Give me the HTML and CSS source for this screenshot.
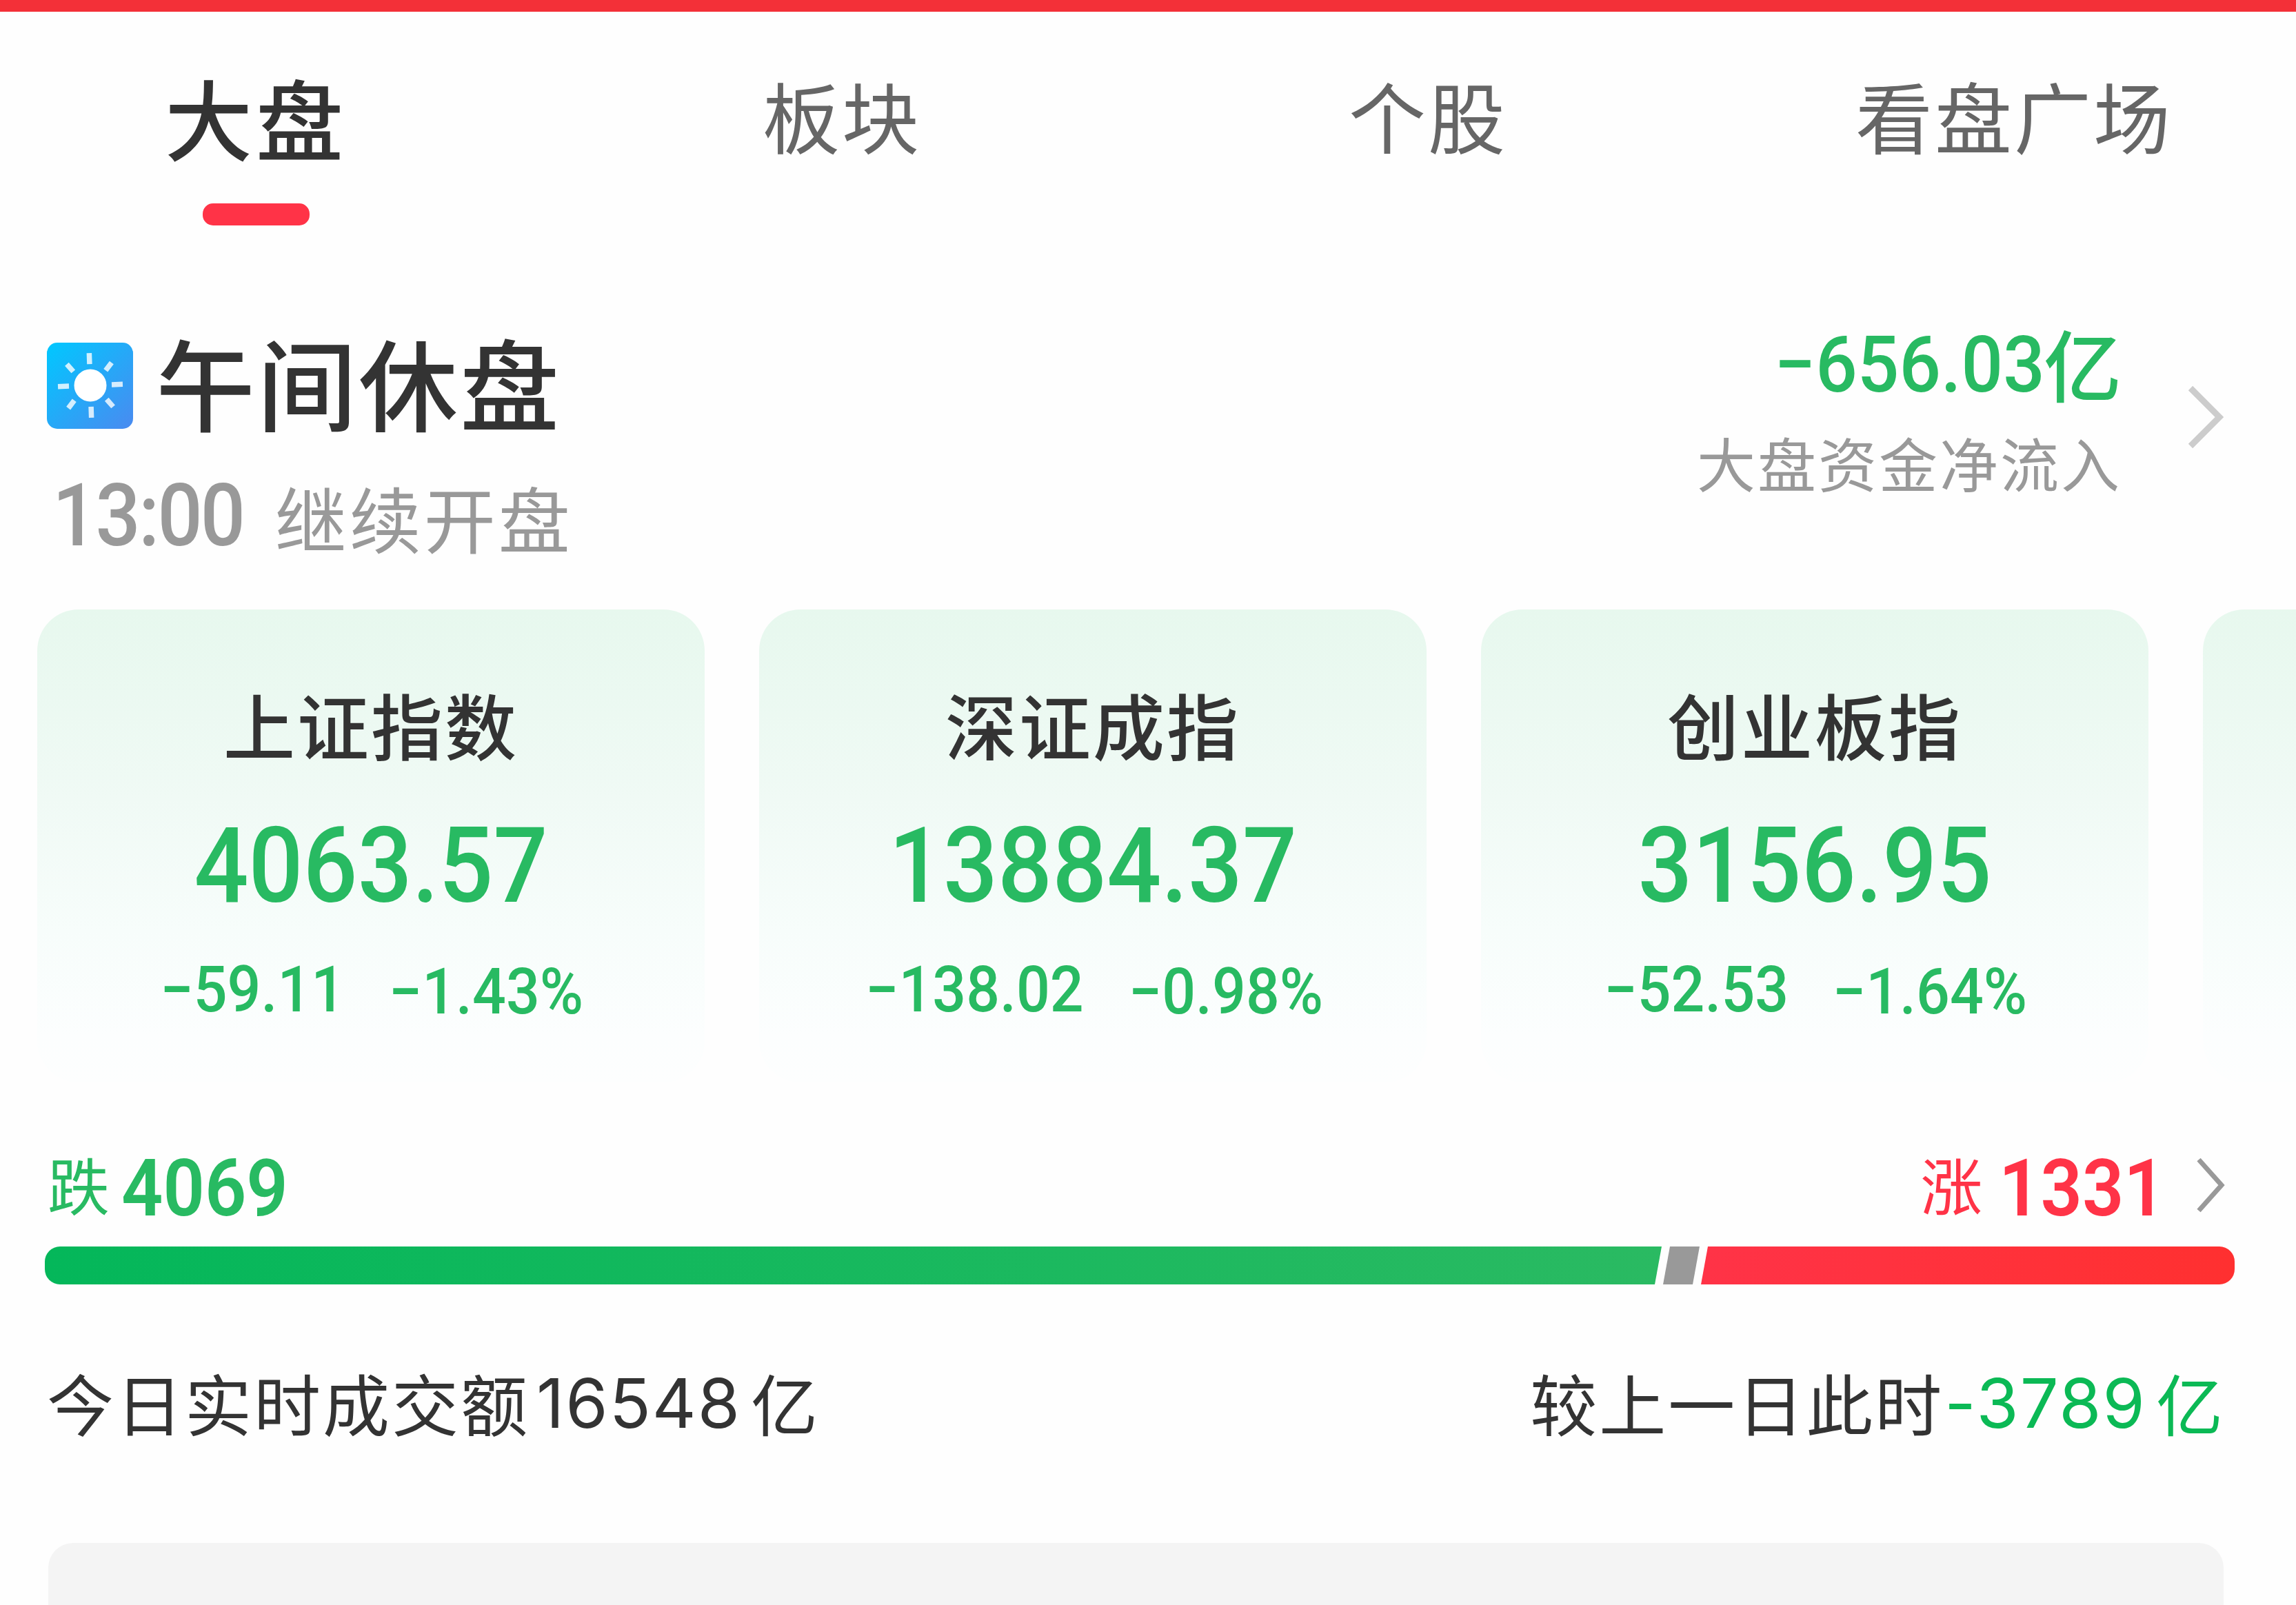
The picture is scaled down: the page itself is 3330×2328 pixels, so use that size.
FILE: index.html
```html
<!DOCTYPE html>
<html lang="zh-CN">
<head>
    <meta charset="UTF-8">
    <title>大盘</title>
    <link rel="stylesheet" href="styles.css">
</head>
<body>
    <div class="top-bar"></div>

    <nav class="tabs">
        <div class="tab active">大盘</div>
        <div class="tab">板块</div>
        <div class="tab">个股</div>
        <div class="tab">看盘广场</div>
    </nav>

    <section class="status">
        <div class="session">
            <div class="session-title">
                <svg class="sun" viewBox="0 0 125 125">
                    <defs>
                        <linearGradient id="sky" x1="0" y1="0" x2="1" y2="1">
                            <stop offset="0" stop-color="#00c8ff"/>
                            <stop offset="1" stop-color="#4a8af0"/>
                        </linearGradient>
                    </defs>
                    <rect width="125" height="125" rx="15" fill="url(#sky)"/>
                    <circle cx="63" cy="62" r="23.5" fill="#fff"/>
                    <g stroke="#fff" stroke-opacity="0.8" stroke-width="7.5" transform="rotate(-2 63 62)">
                        <path d="M63 15v16M63 93v16M16 62h16M94 62h16"/>
                        <path d="M30 30l9 11M95 30l-9 11M30 94l9 -11M95 94l-9 -11"/>
                    </g>
                </svg>
                <h1>午间休盘</h1>
            </div>
            <div class="session-next">
                <span class="num">13:00</span>
                <span class="label">继续开盘</span>
            </div>
        </div>
        <div class="flow">
            <div class="flow-text">
                <div class="flow-value"><span class="num">−656.03</span><span class="unit">亿</span></div>
                <div class="flow-label">大盘资金净流入</div>
            </div>
            <svg class="arrow" viewBox="0 0 52 96"><path d="M4 6L46 48L4 90"/></svg>
        </div>
    </section>

    <section class="cards">
        <div class="card">
            <h2>上证指数</h2>
            <div class="value num">4063.57</div>
            <div class="change"><span class="num">−59.11</span><span class="num pct">−1.43%</span></div>
        </div>
        <div class="card">
            <h2>深证成指</h2>
            <div class="value num">13884.37</div>
            <div class="change"><span class="num">−138.02</span><span class="num pct">−0.98%</span></div>
        </div>
        <div class="card">
            <h2>创业板指</h2>
            <div class="value num">3156.95</div>
            <div class="change"><span class="num">−52.53</span><span class="num pct">−1.64%</span></div>
        </div>
        <div class="card next"></div>
    </section>

    <section class="breadth">
        <div class="breadth-head">
            <div class="fall"><span class="word">跌</span><span class="num">4069</span></div>
            <div class="rise">
                <span class="word">涨</span><span class="num">1331</span>
                <svg class="arrow-small" viewBox="0 0 42 82"><path d="M4 4L37 41L4 78"/></svg>
            </div>
        </div>
        <div class="ratio">
            <div class="ratio-fall"></div>
            <div class="ratio-flat"></div>
            <div class="ratio-rise"></div>
        </div>
    </section>

    <section class="turnover">
        <div class="today"><span>今日实时成交额</span><span class="digits">16548</span><span>亿</span></div>
        <div class="compare"><span>较上一日此时</span><span class="digits down">-3789</span><span class="down">亿</span></div>
    </section>

    <div class="panel"></div>
</body>
</html>
```

FILE: styles.css
```css
* {
    box-sizing: border-box;
}

body {
    margin: 0;
    width: 3330px;
    height: 2328px;
    overflow: hidden;
    display: flex;
    flex-direction: column;
    background-color: #fefefe;
    color: #333;
    font-family: "Noto Sans CJK SC", sans-serif;
    line-height: 1;
    white-space: nowrap;
}

h1, h2 {
    margin: 0;
    font-weight: 500;
}

svg {
    display: block;
    flex: none;
}

.num {
    display: inline-block;
    font-family: Roboto, sans-serif;
    font-weight: 500;
    transform: scaleX(0.935);
}

.top-bar {
    flex: none;
    height: 17px;
    background-color: #f33038;
}

/* tabs */
.tabs {
    flex: none;
    display: flex;
    height: 323px;
    margin-left: -54px;
}

.tab {
    flex: none;
    width: 850px;
    padding-top: 93px;
    text-align: center;
    font-size: 112px;
    letter-spacing: 3px;
    color: #666;
}

.tab:last-child {
    width: 810px;
    margin-left: 20px;
}

.tab.active {
    padding-top: 89px;
    font-size: 127px;
    font-weight: 500;
    letter-spacing: 5px;
    color: #333;
}

.tab.active::after {
    content: "";
    display: block;
    width: 155px;
    height: 32px;
    margin: 62px auto 0;
    border-radius: 15px;
    background-color: #ff3347;
}

/* session status */
.status {
    flex: none;
    display: flex;
    justify-content: space-between;
    height: 544px;
    padding: 139px 105px 0 68px;
}

.session-title {
    display: flex;
    height: 145px;
}

.sun {
    width: 125px;
    height: 125px;
    margin-top: 18px;
}

.session-title h1 {
    margin: 1px 0 0 33px;
    font-size: 144px;
    letter-spacing: 3px;
}

.session-next {
    display: flex;
    margin-top: 61px;
    color: #999;
}

.session-next .num {
    margin-left: 8px;
    font-size: 126px;
    letter-spacing: -3px;
    transform: scaleX(0.91);
    transform-origin: left;
}

.session-next .label {
    margin: 13px 0 0 18px;
    font-size: 104px;
    letter-spacing: 4px;
}

.flow {
    display: flex;
    margin-top: -7px;
}

.flow-text {
    text-align: right;
}

.flow-value {
    display: flex;
    justify-content: flex-end;
    height: 114px;
    color: #28ba62;
}

.flow-value .num {
    font-size: 114px;
    transform-origin: right;
}

.flow-value .unit {
    margin: -3px 0 0 -2px;
    font-size: 113px;
    font-weight: 500;
}

.flow-label {
    margin-top: 41px;
    font-size: 85px;
    letter-spacing: 3px;
    color: #999;
}

.arrow {
    width: 52px;
    height: 96px;
    margin: 85px 0 0 96px;
    fill: none;
    stroke: #ccc;
    stroke-width: 9;
}

/* index cards */
.cards {
    flex: none;
    display: flex;
    gap: 79px;
    padding-left: 54px;
}

.card {
    flex: none;
    width: 968px;
    height: 686px;
    padding-top: 114px;
    border-radius: 60px;
    background: linear-gradient(#e7f8ee, #f0faf5 40%, #f7fdfb 68%, #fcfefe 90%, #fdfefe);
    text-align: center;
}

.card.next {
    flex: 1;
    border-radius: 60px 0 0 60px;
}

.card h2 {
    font-size: 104px;
    letter-spacing: 3px;
}

.card .value {
    display: block;
    margin-top: 78px;
    font-size: 152px;
    color: #28ba62;
    transform: scaleX(0.915);
}

.change {
    display: flex;
    justify-content: center;
    gap: 45px;
    margin-top: 58px;
    padding-left: 3px;
    font-size: 92px;
    color: #28ba62;
}

.change .pct {
    margin-top: 3px;
}

/* fall and rise counts */
.breadth {
    flex: none;
    padding: 96px 89px 0 65px;
}

.breadth-head {
    display: flex;
    justify-content: space-between;
    height: 142px;
}

.fall, .rise {
    display: flex;
}

.fall {
    padding-left: 4px;
    color: #28ba62;
}

.rise {
    padding-right: 14px;
    color: #ff3347;
}

.word {
    margin-top: 5px;
    font-size: 90px;
}

.breadth-head .num {
    margin-left: 17px;
    font-size: 115px;
    font-weight: 600;
    transform: scaleX(0.92);
    transform-origin: left;
}

.rise .num {
    margin-left: 24px;
}

.arrow-small {
    width: 42px;
    height: 82px;
    margin: 12px 0 0 23px;
    fill: none;
    stroke: #999;
    stroke-width: 7;
}

.ratio {
    display: flex;
    height: 55px;
    border-radius: 22px;
    overflow: hidden;
}

.ratio-fall {
    width: 2345px;
    background: linear-gradient(90deg, #04b75a, #2aba62);
    clip-path: polygon(0 0, 100% 0, calc(100% - 10px) 100%, 0 100%);
}

.ratio-flat {
    width: 53px;
    margin: 0 2px;
    background-color: #999;
    clip-path: polygon(10px 0, 100% 0, calc(100% - 10px) 100%, 0 100%);
}

.ratio-rise {
    flex: 1;
    background: linear-gradient(90deg, #ff3347, #ff3030);
    clip-path: polygon(10px 0, 100% 0, 100% 100%, 0 100%);
}

/* turnover */
.turnover {
    flex: none;
    display: flex;
    justify-content: space-between;
    height: 254px;
    margin-top: 121px;
    padding: 0 103px 0 68px;
    font-size: 97px;
    letter-spacing: 3px;
}

.today, .compare {
    display: flex;
}

.digits {
    margin: 2px 14px 0 10px;
    font-family: Inter, sans-serif;
    font-size: 99px;
    letter-spacing: 2px;
}

.compare .digits {
    margin-left: 1px;
}

.down {
    color: #0bb955;
}

.panel {
    flex: none;
    width: 3155px;
    height: 90px;
    margin-left: 70px;
    border-radius: 36px 36px 0 0;
    background-color: #f4f4f4;
}
```
